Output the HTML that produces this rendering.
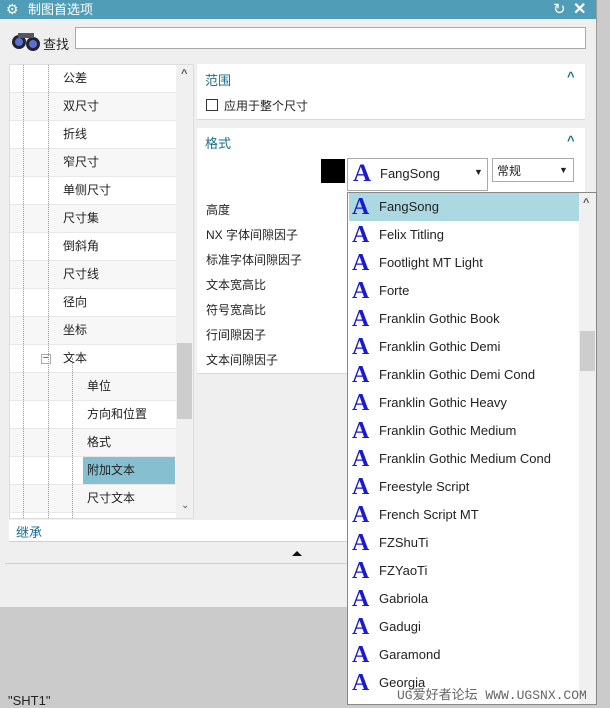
<!DOCTYPE html>
<html><head><meta charset="utf-8"><style>
*{margin:0;padding:0;box-sizing:border-box}
body{width:610px;height:705px;overflow:hidden;background:#cbcbcb;font-family:"Liberation Sans","Noto Sans CJK SC",sans-serif;font-size:12px;color:#222;position:relative}
.a{position:absolute}
.dlg{left:0;top:0;width:597px;height:607px;background:#efefef}
.title{left:0;top:0;width:597px;height:19px;background:#4f9db7;color:#fff;font-size:13px;line-height:19px}
.row{position:absolute;left:0;width:166px;height:28px;border-bottom:1px solid #e8e8e8;line-height:27px}
.row span{position:absolute}
.it{position:absolute;left:1px;width:231px;height:28px;line-height:28px;font-size:13px}
.it b{position:absolute;left:3px;top:0;font-family:"Liberation Serif",serif;color:#1a1ad0;font-size:24px;font-weight:bold;line-height:29px}
.it span{position:absolute;left:30px;color:#222}
.sec{color:#1b6e8f;font-size:13px}
.car{color:#1b6e8f;font-weight:bold;font-size:13px}
</style></head><body>
<div class="a dlg"></div>
<div class="a title"><span style="position:absolute;left:6px;font-size:14px">⚙</span><span style="position:absolute;left:28px">制图首选项</span><span style="position:absolute;left:553px;font-size:15px">↻</span><span style="position:absolute;left:573px;font-size:16px;font-weight:bold">✕</span></div>
<svg class="a" style="left:10px;top:30px" width="32" height="24"><ellipse cx="9" cy="12" rx="7" ry="7" fill="#223"/><ellipse cx="23" cy="14" rx="7" ry="7" fill="#223"/><circle cx="9" cy="12" r="4" fill="#5a6fd0"/><circle cx="23" cy="14" r="4" fill="#5a6fd0"/><rect x="8" y="3" width="16" height="5" fill="#556"/></svg>
<div class="a" style="left:43px;top:34px;font-size:13px">查找</div>
<div class="a" style="left:75px;top:27px;width:511px;height:22px;background:#fff;border:1px solid #a8a8a8"></div>
<div class="a" style="left:9px;top:64px;width:185px;height:455px;background:#fff;border:1px solid #ddd;overflow:hidden">
 <div class="row" style="top:0;background:#fff"><span style="left:53px">公差</span></div>
 <div class="row" style="top:28px;background:#f7f7f7"><span style="left:53px">双尺寸</span></div>
 <div class="row" style="top:56px;background:#fff"><span style="left:53px">折线</span></div>
 <div class="row" style="top:84px;background:#f7f7f7"><span style="left:53px">窄尺寸</span></div>
 <div class="row" style="top:112px;background:#fff"><span style="left:53px">单侧尺寸</span></div>
 <div class="row" style="top:140px;background:#f7f7f7"><span style="left:53px">尺寸集</span></div>
 <div class="row" style="top:168px;background:#fff"><span style="left:53px">倒斜角</span></div>
 <div class="row" style="top:196px;background:#f7f7f7"><span style="left:53px">尺寸线</span></div>
 <div class="row" style="top:224px;background:#fff"><span style="left:53px">径向</span></div>
 <div class="row" style="top:252px;background:#f7f7f7"><span style="left:53px">坐标</span></div>
 <div class="row" style="top:280px;background:#fff"><span style="left:31px;top:9px;width:10px;height:10px;border:1px solid #aaa;line-height:6px;font-size:10px;text-align:center">–</span><span style="left:53px">文本</span></div>
 <div class="row" style="top:308px;background:#f7f7f7"><span style="left:77px">单位</span></div>
 <div class="row" style="top:336px;background:#fff"><span style="left:77px">方向和位置</span></div>
 <div class="row" style="top:364px;background:#f7f7f7"><span style="left:77px">格式</span></div>
 <div class="row" style="top:392px;background:#fff"><span style="left:73px;width:92px;height:27px;background:#86c0d0;padding-left:4px">附加文本</span></div>
 <div class="row" style="top:420px;background:#f7f7f7"><span style="left:77px">尺寸文本</span></div>
 <div class="a" style="left:13px;top:0;height:455px;border-left:1px dotted #999"></div>
 <div class="a" style="left:38px;top:0;height:455px;border-left:1px dotted #999"></div>
 <div class="a" style="left:62px;top:293px;height:162px;border-left:1px dotted #999"></div>
 <div class="a" style="left:166px;top:0;width:17px;height:453px;background:#f0f0f0"></div>
 <div class="a" style="left:167px;top:278px;width:15px;height:76px;background:#cdcdcd"></div>
 <div class="a" style="left:171px;top:3px;font-size:11px;color:#555;font-weight:bold">^</div>
 <div class="a" style="left:171px;top:435px;font-size:10px;color:#555">⌄</div>
</div>
<div class="a" style="left:197px;top:64px;width:388px;height:56px;background:#fff;border-bottom:1px solid #d8d8d8">
 <div class="a sec" style="left:8px;top:6px">范围</div><div class="a car" style="left:370px;top:5px">^</div>
 <div class="a" style="left:9px;top:35px;width:12px;height:12px;border:1px solid #333"></div>
 <div class="a" style="left:27px;top:33px">应用于整个尺寸</div>
</div>
<div class="a" style="left:197px;top:128px;width:388px;height:246px;background:#fff;border-bottom:1px solid #d8d8d8">
 <div class="a sec" style="left:8px;top:5px">格式</div><div class="a car" style="left:370px;top:5px">^</div>
 <div class="a" style="left:124px;top:31px;width:24px;height:24px;background:#000"></div>
 <div class="a" style="left:150px;top:30px;width:141px;height:33px;border:1px solid #aaa;background:#fff"><b style="position:absolute;left:5px;top:1px;font-family:'Liberation Serif',serif;color:#1a1ad0;font-size:25px;font-weight:bold">A</b><span style="position:absolute;left:32px;top:7px;font-size:13px">FangSong</span><span style="position:absolute;left:126px;top:8px;font-size:9px">▼</span></div>
 <div class="a" style="left:295px;top:30px;width:82px;height:24px;border:1px solid #aaa;background:#fff"><span style="position:absolute;left:4px;top:3px">常规</span><span style="position:absolute;left:66px;top:6px;font-size:9px">▼</span></div>
 <div class="a" style="left:9px;top:70px;line-height:25px">高度<br>NX 字体间隙因子<br>标准字体间隙因子<br>文本宽高比<br>符号宽高比<br>行间隙因子<br>文本间隙因子</div>
</div>
<div class="a" style="left:9px;top:520px;width:588px;height:22px;background:#fff;border-bottom:1px solid #d0d0d0"><span class="sec" style="position:absolute;left:7px;top:2px">继承</span></div>
<div class="a" style="left:292px;top:551px;width:0;height:0;border-left:5px solid transparent;border-right:5px solid transparent;border-bottom:5px solid #111"></div>
<div class="a" style="left:5px;top:563px;width:592px;border-top:1px solid #d0d0d0"></div>
<div class="a" style="left:596px;top:0;width:1px;height:705px;background:#999"></div>
<div class="a" style="left:8px;top:693px;font-size:13px;color:#222">"SHT1"</div>
<div class="a" style="left:347px;top:192px;width:250px;height:513px;background:#fff;border:1px solid #888;overflow:hidden">
 <div class="it" style="top:0;background:#acd8e2"><b>A</b><span>FangSong</span></div>
 <div class="it" style="top:28px"><b>A</b><span>Felix Titling</span></div>
 <div class="it" style="top:56px"><b>A</b><span>Footlight MT Light</span></div>
 <div class="it" style="top:84px"><b>A</b><span>Forte</span></div>
 <div class="it" style="top:112px"><b>A</b><span>Franklin Gothic Book</span></div>
 <div class="it" style="top:140px"><b>A</b><span>Franklin Gothic Demi</span></div>
 <div class="it" style="top:168px"><b>A</b><span>Franklin Gothic Demi Cond</span></div>
 <div class="it" style="top:196px"><b>A</b><span>Franklin Gothic Heavy</span></div>
 <div class="it" style="top:224px"><b>A</b><span>Franklin Gothic Medium</span></div>
 <div class="it" style="top:252px"><b>A</b><span>Franklin Gothic Medium Cond</span></div>
 <div class="it" style="top:280px"><b>A</b><span>Freestyle Script</span></div>
 <div class="it" style="top:308px"><b>A</b><span>French Script MT</span></div>
 <div class="it" style="top:336px"><b>A</b><span>FZShuTi</span></div>
 <div class="it" style="top:364px"><b>A</b><span>FZYaoTi</span></div>
 <div class="it" style="top:392px"><b>A</b><span>Gabriola</span></div>
 <div class="it" style="top:420px"><b>A</b><span>Gadugi</span></div>
 <div class="it" style="top:448px"><b>A</b><span>Garamond</span></div>
 <div class="it" style="top:476px"><b>A</b><span>Georgia</span></div>
 <div class="a" style="left:231px;top:0;width:17px;height:513px;background:#f0f0f0"></div>
 <div class="a" style="left:232px;top:138px;width:15px;height:40px;background:#cdcdcd"></div>
 <div class="a" style="left:235px;top:4px;font-size:11px;color:#555;font-weight:bold">^</div>
</div>
<div class="a" style="left:397px;top:684px;font-family:'Liberation Mono','Noto Sans CJK SC',monospace;font-size:13px;color:#666">UG爱好者论坛 WWW.UGSNX.COM</div>
</body></html>
